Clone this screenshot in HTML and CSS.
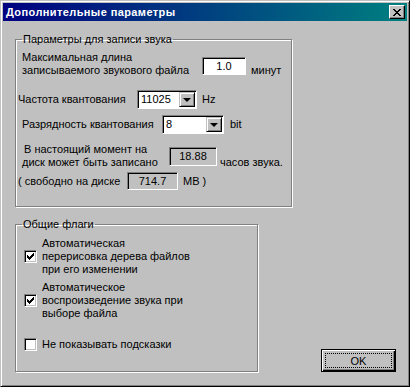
FILE: index.html
```html
<!DOCTYPE html>
<html lang="ru">
<head>
    <meta charset="UTF-8">
    <title>Дополнительные параметры</title>
    <link rel="stylesheet" href="styles.css">
</head>
<body>

    <div class="window">
        <div class="titlebar">
            <span class="title">Дополнительные параметры</span>
            <span class="close">
                <svg width="8" height="7" viewBox="0 0 8 7" shape-rendering="crispEdges">
                    <path d="M0 0h2v1h-2zM6 0h2v1h-2zM1 1h2v1h-2zM5 1h2v1h-2zM2 2h4v1h-4zM3 3h2v1h-2zM2 4h4v1h-4zM1 5h2v1h-2zM5 5h2v1h-2zM0 6h2v1h-2zM6 6h2v1h-2z" fill="#000"/>
                </svg>
            </span>
        </div>

        <div class="client">
            <fieldset class="group group-sound">
                <legend>Параметры для записи звука</legend>

                <div class="row row-length">
                    <div class="label label-length">Максимальная длина<br>записываемого звукового файла</div>
                    <div class="field field-edit field-length">1.0</div>
                    <span class="unit unit-length">минут</span>
                </div>

                <div class="row row-rate">
                    <div class="label label-rate">Частота квантования</div>
                    <div class="field combo combo-rate">
                        <span class="combo-text">11025</span>
                        <span class="combo-btn"><span class="arrow"></span></span>
                    </div>
                    <span class="unit unit-rate">Hz</span>
                </div>

                <div class="row row-bits">
                    <div class="label label-bits">Разрядность квантования</div>
                    <div class="field combo combo-bits">
                        <span class="combo-text">8</span>
                        <span class="combo-btn"><span class="arrow"></span></span>
                    </div>
                    <span class="unit unit-bits">bit</span>
                </div>

                <div class="row row-hours">
                    <div class="label label-hours"><span class="first">В настоящий момент на</span><br>диск может быть записано</div>
                    <div class="field field-static field-hours">18.88</div>
                    <span class="unit unit-hours">часов звука.</span>
                </div>

                <div class="row row-free">
                    <div class="label label-free">( свободно на диске</div>
                    <div class="field field-static field-free">714.7</div>
                    <span class="unit unit-free">MB )</span>
                </div>
            </fieldset>

            <div class="bottom">
                <fieldset class="group group-flags">
                    <legend>Общие флаги</legend>

                    <div class="check check-first">
                        <span class="box checked"></span>
                        <span class="check-label">Автоматическая<br>перерисовка дерева файлов<br>при его изменении</span>
                    </div>
                    <div class="check check-second">
                        <span class="box checked"></span>
                        <span class="check-label">Автоматическое<br>воспроизведение звука при<br>выборе файла</span>
                    </div>
                    <div class="check check-third">
                        <span class="box"></span>
                        <span class="check-label">Не показывать подсказки</span>
                    </div>
                </fieldset>

                <button class="ok"><span class="focus">OK</span></button>
            </div>
        </div>
    </div>

</body>
</html>
```

FILE: styles.css
```css
body {
    margin: 0;
    background-color: #c0c0c0;
    font-family: "Liberation Sans", Arial, sans-serif;
    font-size: 11px;
    line-height: 13px;
    color: #000000;
}
.window {
    width: 410px;
    height: 387px;
    box-sizing: border-box;
    padding: 2px;
    border: 1px solid;
    border-color: #c0c0c0 #000000 #000000 #c0c0c0;
    box-shadow: inset 1px 1px 0 #ffffff, inset -1px -1px 0 #808080;
    background-color: #c0c0c0;
}
.titlebar {
    height: 18px;
    display: flex;
    align-items: center;
    justify-content: space-between;
    background: linear-gradient(to right, #000080, #008080);
}
.title {
    padding-left: 3px;
    color: #ffffff;
    font-weight: bold;
    line-height: 18px;
    letter-spacing: 0.4px;
}
.close {
    width: 16px;
    height: 14px;
    box-sizing: border-box;
    margin-right: 2px;
    display: flex;
    align-items: center;
    justify-content: center;
    border: 1px solid;
    border-color: #ffffff #000000 #000000 #ffffff;
    box-shadow: inset -1px -1px 0 #808080;
    background-color: #c0c0c0;
}
.close svg {
    display: block;
    margin-left: -1px;
}

/* group boxes */
.client {
    padding-left: 12px;
}
.group {
    margin: 12px 0 0 0;
    padding: 0;
    border: 1px solid #808080;
    box-shadow: inset 1px 1px 0 #ffffff, 1px 1px 0 #ffffff;
    min-width: 0;
}
.group legend {
    margin-left: 6px;
    padding: 0 1px;
    line-height: 13px;
}
.group-sound {
    width: 277px;
    box-sizing: border-box;
    padding-bottom: 16px;
}
.row {
    display: flex;
    align-items: center;
}
.label {
    flex: none;
}
.unit {
    flex: none;
}

.row-length {
    margin: 5px 0 0 6px;
    align-items: flex-end;
}
.label-length {
    width: 180px;
}
.field-length {
    width: 44px;
    height: 18px;
    margin-bottom: 2px;
}
.unit-length {
    margin-left: 5px;
}

.row-rate {
    margin: 13px 0 0 2px;
    height: 19px;
}
.label-rate {
    width: 119px;
}
.combo-rate {
    width: 60px;
    height: 19px;
}
.unit-rate {
    margin-left: 5px;
}

.row-bits {
    margin: 6px 0 0 6px;
    height: 19px;
}
.label-bits {
    width: 140px;
}
.combo-bits {
    width: 62px;
    height: 19px;
}
.unit-bits {
    margin-left: 6px;
}

.row-hours {
    margin: 9px 0 0 6px;
    align-items: flex-end;
}
.label-hours {
    width: 147px;
}
.label-hours .first {
    padding-left: 2px;
}
.field-hours {
    width: 48px;
    height: 19px;
    margin-bottom: 3px;
}
.unit-hours {
    margin-left: 3px;
}

.row-free {
    margin: 3px 0 0 2px;
    height: 18px;
}
.label-free {
    width: 109px;
}
.field-free {
    width: 51px;
    height: 18px;
}
.unit-free {
    margin-left: 5px;
}

/* sunken fields */
.field {
    flex: none;
    box-sizing: border-box;
    border: 1px solid;
    border-color: #808080 #ffffff #ffffff #808080;
    box-shadow: inset 1px 1px 0 #000000;
    display: flex;
    align-items: center;
    justify-content: center;
}
.field-edit {
    background-color: #ffffff;
}
.field-static {
    background-color: #c0c0c0;
    color: #000000;
}
.combo {
    justify-content: space-between;
    background-color: #ffffff;
    padding: 1px 1px 1px 1px;
}
.combo-text {
    padding-left: 2px;
}
.combo-btn {
    width: 16px;
    height: 100%;
    box-sizing: border-box;
    display: flex;
    align-items: center;
    justify-content: center;
    border: 1px solid;
    border-color: #c0c0c0 #000000 #000000 #c0c0c0;
    box-shadow: inset 1px 1px 0 #ffffff, inset -1px -1px 0 #808080;
    background-color: #c0c0c0;
}
.arrow {
    width: 0;
    height: 0;
    border-left: 4px solid transparent;
    border-right: 4px solid transparent;
    border-top: 4px solid #000000;
}

/* bottom part */
.bottom {
    display: flex;
    align-items: flex-end;
}
.group-flags {
    width: 243px;
    box-sizing: border-box;
    margin-top: 11px;
    padding-bottom: 20px;
}
.check {
    display: flex;
    align-items: center;
    margin-left: 8px;
}
.check-first {
    margin-top: 6px;
}
.check-second {
    margin-top: 5px;
}
.check-third {
    margin-top: 18px;
}
.box {
    flex: none;
    width: 13px;
    height: 13px;
    box-sizing: border-box;
    border: 1px solid;
    border-color: #808080 #ffffff #ffffff #808080;
    box-shadow: inset 1px 1px 0 #000000, inset -1px -1px 0 #c0c0c0;
    background-color: #ffffff;
}
.box.checked {
    background-image: url("data:image/svg+xml,%3Csvg xmlns='http://www.w3.org/2000/svg' width='7' height='7' shape-rendering='crispEdges'%3E%3Cpath d='M6 0h1v3h-1zM5 1h1v3h-1zM4 2h1v3h-1zM0 2h1v3h-1zM1 3h1v3h-1zM2 4h1v3h-1zM3 3h1v3h-1z'/%3E%3C/svg%3E");
    background-repeat: no-repeat;
    background-position: 2px 2px;
}
.check-label {
    margin-left: 5px;
}

.ok {
    width: 75px;
    height: 23px;
    margin-left: 63px;
    padding: 3px;
    box-sizing: border-box;
    border: 1px solid #000000;
    box-shadow: inset 1px 1px 0 #ffffff, inset -1px -1px 0 #000000, inset -2px -2px 0 #808080;
    background-color: #c0c0c0;
    font-family: "Liberation Sans", Arial, sans-serif;
    font-size: 11px;
    color: #000000;
    display: flex;
}
.focus {
    flex: 1;
    display: flex;
    align-items: center;
    justify-content: center;
    border: 1px dotted #000000;
}
```
